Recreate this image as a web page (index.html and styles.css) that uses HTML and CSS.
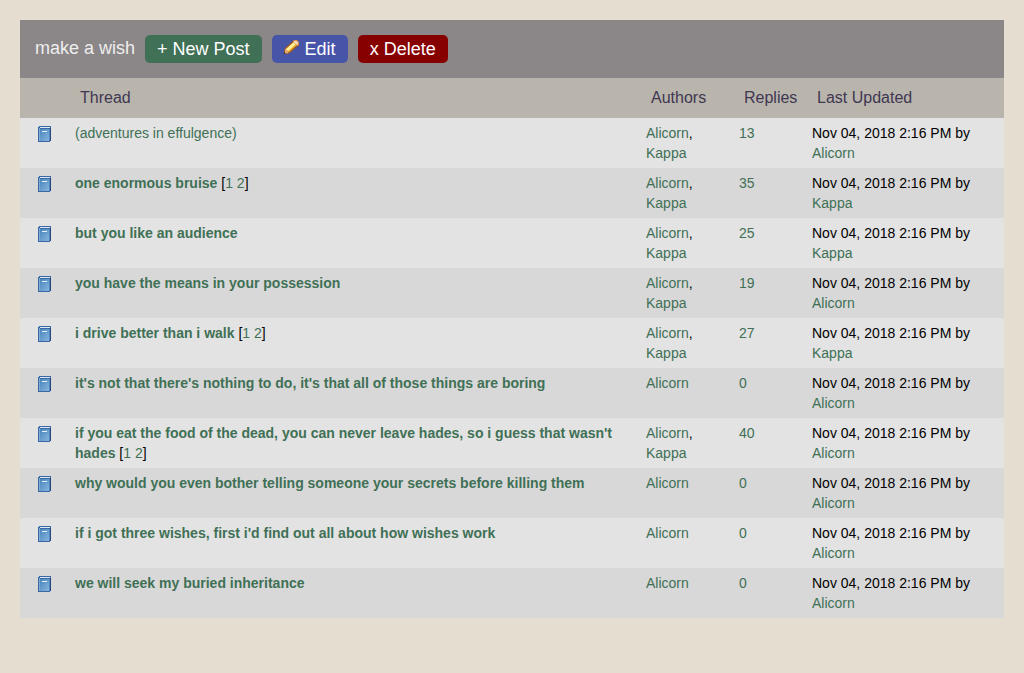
FILE: index.html
```html
<!DOCTYPE html>
<html lang="en">
<head>
<meta charset="utf-8">
<title>make a wish</title>
<link rel="stylesheet" href="styles.css">
</head>
<body>
<svg class="defs" aria-hidden="true">
  <defs>
    <linearGradient id="cover" x1="0" y1="0" x2="1" y2="1">
      <stop offset="0" stop-color="#4a86bd"/><stop offset="1" stop-color="#86b4dc"/>
    </linearGradient>
    <symbol id="book" viewBox="0 0 16 16">
      <path d="M2 0H14V15H13V16H1V1H2Z" fill="#3a68a4"/>
      <path d="M12 3h1v12h-1z" fill="#4f86bd"/>
      <path d="M13 2h1v13h-1z" fill="#27467a"/>
      <path d="M3 1H13V2H3Z" fill="#dfe9f4"/>
      <path d="M2 2h1v13H2z" fill="#82abd3"/>
      <path d="M3 3H12V15H3Z" fill="url(#cover)"/>
      <path d="M5 5h5v1H5z" fill="#eef5fb"/>
      <path d="M5 6h5v1H5z" fill="#5a93c6"/>
    </symbol>
    <symbol id="pencil" viewBox="0 0 16 16">
      <path d="M0 15V12L1 9L10 1H13L15 3V6L6 14L3 15Z" fill="#9c5a22"/>
      <path d="M1 11L11 2L14 5L5 13Z" fill="#f3b62f"/>
      <path d="M2 10L10 3L12.500 4.500L4 12Z" fill="#fff0a0"/>
      <path d="M10 1H13L15 3V6L13 7L9 3Z" fill="#d98f57"/>
      <path d="M10 2H12.500L14 4V5L13 6L9.500 3Z" fill="#f8dfb0"/>
      <path d="M1 10L5 13L3 14.500H1V12Z" fill="#dfa777"/>
      <path d="M0 13L2 15H0Z" fill="#3d2a22"/>
    </symbol>
  </defs>
</svg>
<main class="board">
  <header class="board-header">
    <h1 class="board-title">make a wish</h1>
    <a class="action action-new" href="#">+ New Post</a>
    <a class="action action-edit" href="#"><svg class="icon" aria-hidden="true"><use href="#pencil"/></svg> Edit</a>
    <a class="action action-delete" href="#">x Delete</a>
  </header>
  <table class="threads">
    <thead>
      <tr><th class="col-icon"></th><th>Thread</th><th class="col-authors">Authors</th><th class="col-replies">Replies</th><th class="col-updated">Last Updated</th></tr>
    </thead>
    <tbody>
      <tr><td class="mark"><svg class="icon" aria-hidden="true"><use href="#book"/></svg></td><td><a href="#">(adventures in effulgence)</a></td><td><a href="#">Alicorn</a>, <a href="#">Kappa</a></td><td><a href="#">13</a></td><td>Nov 04, 2018 2:16 PM by <a href="#">Alicorn</a></td></tr>
      <tr><td class="mark"><svg class="icon" aria-hidden="true"><use href="#book"/></svg></td><td><a class="unread" href="#">one enormous bruise</a> [<a href="#">1</a> <a href="#">2</a>]</td><td><a href="#">Alicorn</a>, <a href="#">Kappa</a></td><td><a href="#">35</a></td><td>Nov 04, 2018 2:16 PM by <a href="#">Kappa</a></td></tr>
      <tr><td class="mark"><svg class="icon" aria-hidden="true"><use href="#book"/></svg></td><td><a class="unread" href="#">but you like an audience</a></td><td><a href="#">Alicorn</a>, <a href="#">Kappa</a></td><td><a href="#">25</a></td><td>Nov 04, 2018 2:16 PM by <a href="#">Kappa</a></td></tr>
      <tr><td class="mark"><svg class="icon" aria-hidden="true"><use href="#book"/></svg></td><td><a class="unread" href="#">you have the means in your possession</a></td><td><a href="#">Alicorn</a>, <a href="#">Kappa</a></td><td><a href="#">19</a></td><td>Nov 04, 2018 2:16 PM by <a href="#">Alicorn</a></td></tr>
      <tr><td class="mark"><svg class="icon" aria-hidden="true"><use href="#book"/></svg></td><td><a class="unread" href="#">i drive better than i walk</a> [<a href="#">1</a> <a href="#">2</a>]</td><td><a href="#">Alicorn</a>, <a href="#">Kappa</a></td><td><a href="#">27</a></td><td>Nov 04, 2018 2:16 PM by <a href="#">Kappa</a></td></tr>
      <tr><td class="mark"><svg class="icon" aria-hidden="true"><use href="#book"/></svg></td><td><a class="unread" href="#">it's not that there's nothing to do, it's that all of those things are boring</a></td><td><a href="#">Alicorn</a></td><td><a href="#">0</a></td><td>Nov 04, 2018 2:16 PM by <a href="#">Alicorn</a></td></tr>
      <tr><td class="mark"><svg class="icon" aria-hidden="true"><use href="#book"/></svg></td><td><a class="unread" href="#">if you eat the food of the dead, you can never leave hades, so i guess that wasn't hades</a> [<a href="#">1</a> <a href="#">2</a>]</td><td><a href="#">Alicorn</a>, <a href="#">Kappa</a></td><td><a href="#">40</a></td><td>Nov 04, 2018 2:16 PM by <a href="#">Alicorn</a></td></tr>
      <tr><td class="mark"><svg class="icon" aria-hidden="true"><use href="#book"/></svg></td><td><a class="unread" href="#">why would you even bother telling someone your secrets before killing them</a></td><td><a href="#">Alicorn</a></td><td><a href="#">0</a></td><td>Nov 04, 2018 2:16 PM by <a href="#">Alicorn</a></td></tr>
      <tr><td class="mark"><svg class="icon" aria-hidden="true"><use href="#book"/></svg></td><td><a class="unread" href="#">if i got three wishes, first i'd find out all about how wishes work</a></td><td><a href="#">Alicorn</a></td><td><a href="#">0</a></td><td>Nov 04, 2018 2:16 PM by <a href="#">Alicorn</a></td></tr>
      <tr><td class="mark"><svg class="icon" aria-hidden="true"><use href="#book"/></svg></td><td><a class="unread" href="#">we will seek my buried inheritance</a></td><td><a href="#">Alicorn</a></td><td><a href="#">0</a></td><td>Nov 04, 2018 2:16 PM by <a href="#">Alicorn</a></td></tr>
    </tbody>
  </table>
</main>
</body>
</html>
```

FILE: styles.css
```css
body {
  margin: 20px;
  background: #e5ddd0;
  color: #000;
  font: 14px/20px "Liberation Sans", Arial, sans-serif;
}

a {
  color: #407056;
  text-decoration: none;
}

a:hover {
  text-decoration: underline;
}

.defs {
  position: absolute;
  width: 0;
  height: 0;
}

.board-header {
  display: flex;
  flex-wrap: wrap;
  align-items: center;
  gap: 10px;
  padding: 15px;
  background: #8b8687;
}

.board-title {
  margin: 0;
  padding-bottom: 2px;
  color: #eee;
  font-size: 18px;
  font-weight: normal;
  line-height: 24px;
}

.action {
  padding: 2px 12px;
  border-radius: 5px;
  color: #fff;
  font-size: 18px;
  line-height: 24px;
}

.action-new {
  background: #407056;
}

.action-edit {
  background: #4755a9;
}

.action-delete {
  background: #870000;
}

.icon {
  width: 16px;
  height: 16px;
}

.threads {
  width: 100%;
  border-collapse: collapse;
  table-layout: fixed;
}

.threads th {
  padding: 10px;
  background: #b9b5ac;
  color: #403753;
  font-size: 16px;
  font-weight: normal;
  text-align: left;
}

.threads td {
  padding: 5px;
  vertical-align: top;
}

.threads tbody tr {
  background: #e3e3e3;
}

.threads tbody tr:nth-child(even) {
  background: #d8d8d8;
}

.threads .col-icon {
  width: 30px;
}

.threads .col-authors {
  width: 73px;
}

.threads .col-replies {
  width: 53px;
}

.threads .col-updated {
  width: 177px;
}

.threads .mark {
  text-align: center;
}

.mark .icon {
  display: block;
  margin: 3px auto 0;
}

.unread {
  font-weight: bold;
}
```
